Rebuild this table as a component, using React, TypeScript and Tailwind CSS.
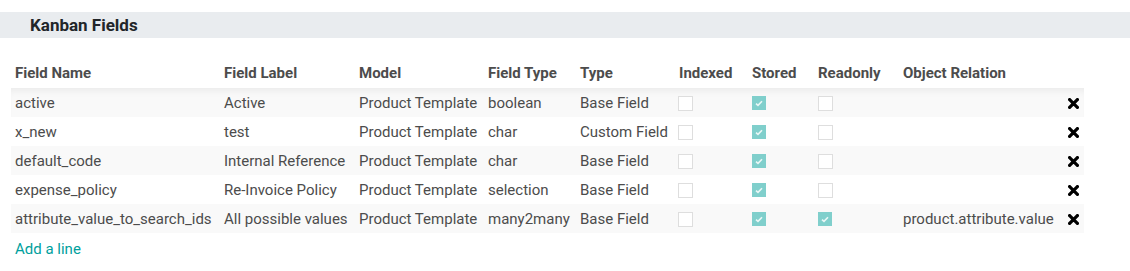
import React from "react";

type Row = {
  name: string;
  label: string;
  model: string;
  ftype: string;
  type: string;
  indexed: boolean;
  stored: boolean;
  readonly: boolean;
  relation: string;
};

const rows: Row[] = [
  { name: "active", label: "Active", model: "Product Template", ftype: "boolean", type: "Base Field", indexed: false, stored: true, readonly: false, relation: "" },
  { name: "x_new", label: "test", model: "Product Template", ftype: "char", type: "Custom Field", indexed: false, stored: true, readonly: false, relation: "" },
  { name: "default_code", label: "Internal Reference", model: "Product Template", ftype: "char", type: "Base Field", indexed: false, stored: true, readonly: false, relation: "" },
  { name: "expense_policy", label: "Re-Invoice Policy", model: "Product Template", ftype: "selection", type: "Base Field", indexed: false, stored: true, readonly: false, relation: "" },
  { name: "attribute_value_to_search_ids", label: "All possible values", model: "Product Template", ftype: "many2many", type: "Base Field", indexed: false, stored: true, readonly: true, relation: "product.attribute.value" },
];

const cols =
  "grid grid-cols-[209px_135px_129px_92px_99px_73px_66px_85px_1fr_20px] items-center";

function Check({ on }: { on: boolean }) {
  if (on) {
    return (
      <div className="w-[14px] h-[14px] bg-[#80cfcc] flex items-center justify-center">
        <svg width="8" height="7" viewBox="0 0 8 7">
          <path d="M1 3.6 L3 5.4 L7 1.2" stroke="#eaf7f6" strokeWidth="1.6" fill="none" />
        </svg>
      </div>
    );
  }
  return <div className="w-[15px] h-[15px] border border-[#dedede] bg-white" />;
}

function Cross() {
  return (
    <svg width="11" height="11" viewBox="0 0 11 11">
      <path d="M1.6 1.6 L9.4 9.4 M9.4 1.6 L1.6 9.4" stroke="#000" strokeWidth="3.2" strokeLinecap="square" />
    </svg>
  );
}

export default function App() {
  return (
    <div
      className="w-[1130px] h-[271px] bg-white text-[15px] text-[#4c4c4c] pt-[12px]"
      style={{ fontFamily: "Roboto, 'Liberation Sans', sans-serif" }}
    >
      <div className="h-[26px] bg-[#e9ecef] flex items-center pl-[30px]">
        <span className="text-[17px] font-bold text-[#212529] leading-none mt-[1px]">Kanban Fields</span>
      </div>
      <div className="mt-[20px] ml-[11px] w-[1073px]">
        <div className={`${cols} h-[30px] font-bold`}>
          <div className="pl-[4px]">Field Name</div>
          <div className="pl-[4px]">Field Label</div>
          <div className="pl-[4px]">Model</div>
          <div className="pl-[4px]">Field Type</div>
          <div className="pl-[4px]">Type</div>
          <div className="pl-[4px]">Indexed</div>
          <div className="pl-[4px]">Stored</div>
          <div className="pl-[4px]">Readonly</div>
          <div className="pl-[4px]">Object Relation</div>
          <div />
        </div>
        {rows.map((r, i) => (
          <div
            key={r.name}
            className={`${cols} h-[29px] pt-[1px] ${i % 2 === 0 ? "bg-[#f9f9f9]" : "bg-white"} ${
              i === 0 ? "shadow-[inset_0_8px_8px_-6px_rgba(0,0,0,0.07)]" : ""
            }`}
          >
            <div className="pl-[4px] whitespace-nowrap">{r.name}</div>
            <div className="pl-[4px] whitespace-nowrap">{r.label}</div>
            <div className="pl-[4px] whitespace-nowrap">{r.model}</div>
            <div className="pl-[4px] whitespace-nowrap">{r.ftype}</div>
            <div className="pl-[4px] whitespace-nowrap">{r.type}</div>
            <div className="pl-[3px]">
              <Check on={r.indexed} />
            </div>
            <div className="pl-[4px]">
              <Check on={r.stored} />
            </div>
            <div className="pl-[4px]">
              <Check on={r.readonly} />
            </div>
            <div className="pl-[4px] whitespace-nowrap">{r.relation}</div>
            <div className="flex items-center pl-[4px]">
              <Cross />
            </div>
          </div>
        ))}
        <div className="h-[30px] flex items-center pl-[4px] pt-[2px] text-[#00a09d]">Add a line</div>
      </div>
    </div>
  );
}
